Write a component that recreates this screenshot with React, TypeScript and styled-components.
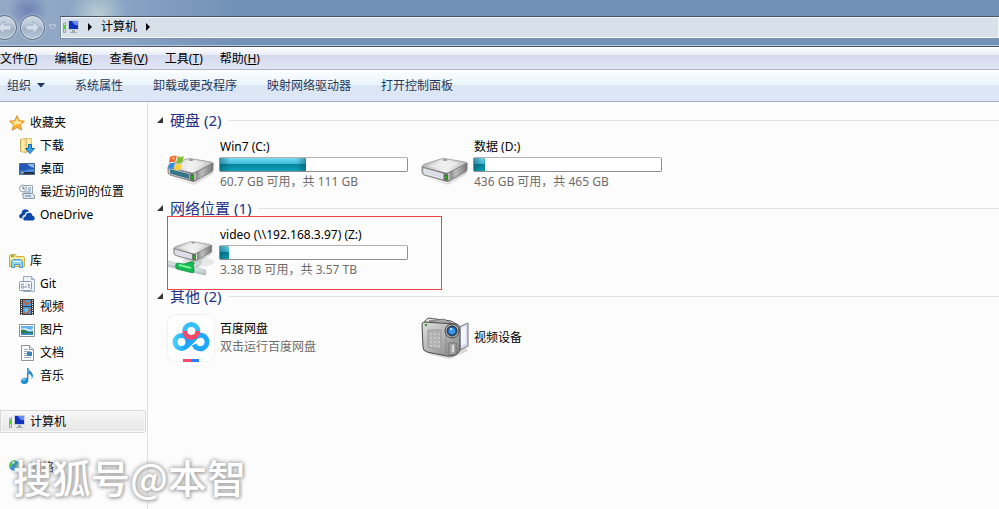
import React from "react";
import styled, { createGlobalStyle } from "styled-components";

const GlobalStyle = createGlobalStyle`
  *, *::before, *::after { box-sizing: border-box; }
  body {
    margin: 0;
    background: #fcfcfc;
    color: #000;
    font: 12px/16px "Noto Sans", "Noto Sans CJK SC", sans-serif;
  }
  button {
    margin: 0;
    padding: 0;
    border: 0;
    background: none;
    color: inherit;
    font: inherit;
    white-space: nowrap;
  }
  a { color: inherit; text-decoration: none; }
  svg { display: block; flex: none; }
`;

const Window = styled.div`
  position: relative;
  display: flex;
  flex-direction: column;
  min-height: 100vh;
  overflow: hidden;
`;

const TitleBar = styled.header`
  display: flex;
  align-items: center;
  height: 47px;
  padding-top: 8px;
  border-bottom: 1px solid #46536a;
  box-shadow: inset 0 -1px 0 #b4c8de;
  background:
    radial-gradient(ellipse 20px 18px at 28px 10px, #5f70adb0 0%, #5f70ad00 100%),
    radial-gradient(ellipse 28px 26px at 98px 14px, #b9cdd2 0%, #b9cdd200 100%),
    linear-gradient(90deg, #93a9c5 0, #8ca5c5 110px, #7191b6 240px);
`;

const RoundButton = styled.button`
  flex: none;
  width: 25px;
  height: 25px;
  border: 1px solid #5c6c82;
  border-radius: 50%;
  background: linear-gradient(#d0dae6 0%, #b3c1d2 48%, #9eafc3 52%, #b8c8da 100%);
  box-shadow: inset 0 0 0 1px #d4dfeb, 0 0 2px #dce7f2;
  svg { margin: auto; }
`;

const NavButtons = styled.div`
  display: flex;
  align-items: center;
  gap: 3px;
  margin-left: -8px;
`;

const HistoryButton = styled.button`
  width: 15px;
  height: 20px;
  svg { margin: auto; }
`;

const AddressBar = styled.nav`
  display: flex;
  flex: 1;
  align-items: center;
  height: 23px;
  padding-left: 2px;
  border: 1px solid #8291a5;
  border-top-color: #46536a;
  border-right: 0;
  box-shadow: inset 0 0 0 1px #f4f7fa;
  background: #d8e0ea;
`;

const Crumb = styled.button`
  display: flex;
  align-items: center;
  gap: 9px;
`;

const CrumbLabel = styled.span`
  padding-left: 9px;
`;

const MenuBar = styled.nav`
  display: flex;
  align-items: center;
  gap: 17px;
  height: 23px;
  padding-top: 1px;
  border-bottom: 1px solid #b1b6c6;
  background: linear-gradient(#fff 0, #e9ecf5 8px, #d4daee 8px, #e0e5f5 100%);
`;

const ToolBar = styled.div`
  display: flex;
  align-items: center;
  gap: 30px;
  height: 32px;
  padding: 0 7px;
  border-bottom: 1px solid #a0afc3;
  color: #1e395b;
  background: linear-gradient(#fdfeff 0, #e9f4fc 15px, #dce7f5 15px, #dce6f4 100%);
`;

const ToolButton = styled.button`
  display: flex;
  align-items: center;
  gap: 6px;
`;

const Body = styled.div`
  display: flex;
  flex: 1;
`;

const Sidebar = styled.nav`
  display: flex;
  flex: none;
  flex-direction: column;
  gap: 23px;
  width: 148px;
  padding: 9px 1px 0 0;
  border-right: 1px solid #d6e5f5;
`;

const NavGroup = styled.ul`
  margin: 0;
  padding: 0;
  list-style: none;
`;

const NavLink = styled.a<{ $level?: number; $selected?: boolean }>`
  display: flex;
  align-items: center;
  gap: 5px;
  height: 23px;
  padding-left: ${(p) => (p.$level ? 19 : 9)}px;
  ${(p) =>
    p.$selected &&
    `
    border-radius: 0 3px 3px 0;
    background: linear-gradient(#f8f8f8, #e5e5e5);
    box-shadow: inset 0 0 0 1px #d9d9d9, inset 0 0 0 2px #f8f8f8;
  `}
`;

const Content = styled.main`
  flex: 1;
  min-width: 0;
  padding-top: 7px;
`;

const Section = styled.section`
  padding-left: 9px;
`;

const SectionTitle = styled.h2`
  display: flex;
  align-items: center;
  gap: 7px;
  height: 22px;
  margin: 0;
  color: #1e3287;
  font-size: 15px;
  font-weight: 400;
  line-height: 22px;
  &::after {
    content: "";
    flex: 1;
    height: 1px;
    background: #e2e2e2;
  }
`;

const SectionToggle = styled.button`
  display: flex;
  align-items: center;
  gap: 7px;
`;

const Tiles = styled.div`
  display: grid;
  grid-template-columns: repeat(auto-fill, 254px);
  padding-left: 10px;
`;

const Tile = styled.a<{ $short?: boolean }>`
  position: relative;
  display: flex;
  align-items: center;
  gap: 4px;
  height: ${(p) => (p.$short ? 62 : 66)}px;
`;

const TileText = styled.div`
  display: flex;
  flex-direction: column;
  gap: 2px;
`;

const TileName = styled.span`
  padding-left: 1px;
`;

const TileNote = styled(TileName)`
  color: #6d6d6d;
`;

const Capacity = styled.div`
  width: 189px;
  height: 15px;
  border: 1px solid #8e8e8e;
  border-top-color: #b2b2b2;
  border-radius: 2px;
  background: #fff;
`;

const CapacityFill = styled.div`
  height: 100%;
  background:
    linear-gradient(90deg, #0a506080, #0a506000 10px, #0a506000 calc(100% - 10px), #0a506080),
    linear-gradient(#7bd9f0 0, #3cbcdc 6px, #04809a 6px, #10a4be 100%);
`;

const Highlight = styled.span`
  position: absolute;
  inset: -3px -21px -5px 0;
  border: 1px solid #ee4444;
  pointer-events: none;
`;

const Watermark = styled.div`
  position: absolute;
  bottom: 5px;
  left: 13px;
  color: #fff;
  font: 500 39px/56px "Noto Sans CJK SC", sans-serif;
  text-shadow: 0 0 4px #aaa, 0 0 5px #aaa, 1px 1px 3px #aaa;
  opacity: 0.94;
  pointer-events: none;
  white-space: nowrap;
`;

const Arrow = ({ back = false }: { back?: boolean }) => (
  <svg width="17" height="17" viewBox="0 0 17 17" aria-hidden="true">
    <path
      d={back ? "M8 2 2 8.5 8 15v-4h7V6H8z" : "M9 2l6 6.5L9 15v-4H2V6h7z"}
      fill="#d3dde8"
      stroke="#a3b2c6"
    />
  </svg>
);

const Chevron = () => (
  <svg width="4" height="8" viewBox="0 0 4 8" aria-hidden="true">
    <path d="M0 0l4 4-4 4z" fill="#000" />
  </svg>
);

const Small = ({ children }: { children: React.ReactNode }) => (
  <svg width="16" height="16" viewBox="0 0 16 16" aria-hidden="true">
    {children}
  </svg>
);

const StarIcon = () => (
  <Small>
    <path d="M8 .7l2.2 5 5.2.5-4 3.6 1.3 5.3L8 12.4l-4.7 2.7 1.3-5.3-4-3.6 5.2-.5z" fill="#ffb733" stroke="#e18a28" />
    <path d="M8 2.8l1.4 3.8 3.8.4-3 2.4L8 8.4 4.2 11l1.2-3.3-2.8-1.1 4-.2z" fill="#ffe9a0" />
  </Small>
);

const DownloadIcon = () => (
  <Small>
    <path d="M1.5 1.5l6-1v14l-6-1z" fill="#f3e19a" stroke="#cfae50" />
    <path d="M7.5.5h4.8v13H7.5z" fill="#fbefb7" stroke="#d8bd66" />
    <path d="M4 1v13" stroke="#fff4c4" />
    <path d="M9.5 6.5h3v4h3L11 15.5l-4.500-5h3z" fill="#37a2ed" stroke="#1766a9" />
  </Small>
);

const DesktopIcon = () => (
  <Small>
    <path d="M.5 2.5h15v11H.5z" fill="#4a8cdf" stroke="#52637d" />
    <path d="M1 3h14v5Q7 8 1 12z" fill="#2258ba" />
    <path d="M8 3h7v4Q11 6 8 3z" fill="#86b9f2" />
    <path d="M1 11h14v2H1z" fill="#26303e" />
    <circle cx="3" cy="11.5" r="2" fill="#3c9fe5" />
    <circle cx="3" cy="11.5" r="1" fill="#f2694a" />
  </Small>
);

const RecentIcon = () => (
  <Small>
    <path d="M6.5 1.5h7v10h-8z" fill="#f2f5f8" stroke="#9aa4b0" />
    <path d="M9 4h3M9 6h3M7 8h5" stroke="#6a94bd" />
    <path d="M3.5 9.5h10l2 2v3h-11z" fill="#dfe5ea" stroke="#909aa6" />
    <path d="M6 12h6" stroke="#5589c7" />
    <circle cx="4" cy="4.5" r="3.5" fill="#f7fafc" stroke="#949ea9" />
    <path d="M4 2.5v2.3H6" fill="none" stroke="#586777" />
  </Small>
);

const OneDriveIcon = () => (
  <Small>
    <path d="M1.8 11.2C-.6 10.5-.2 7 2.5 6.8 2.3 3.8 4.8 2 7.2 2.4c1.5.2 2.5 1 3.1 2.2C7.4 4.6 6 6.2 5.7 8 3.7 8.2 3 9.8 3.6 11.2z" fill="#0b47a8" />
    <path d="M5.6 13.6C3.6 13 3.8 9.7 6.6 9.5 6.5 6.8 8.6 5.5 10.4 5.7c1.7.1 2.8 1.2 3 3 2.8.3 3.2 4 .5 4.9z" fill="#0b47a8" />
  </Small>
);

const LibraryIcon = () => (
  <Small>
    <path d="M.5 13.5v-11l1-1h5l1 2h7l1 1v9z" fill="#f5df84" stroke="#cfac48" />
    <path d="M2 3h3" stroke="#54ad47" strokeWidth="1.5" />
    <path d="M1 5.5h14" stroke="#fff5c1" />
    <path d="M2.5 14.5v-6l2-2h7l2 2v6h-3v-3h-5v3z" fill="#8fd6f5" stroke="#4a9ac6" />
    <path d="M4 8.5h8" stroke="#d9f5ff" />
  </Small>
);

const GitIcon = () => (
  <Small>
    <path d="M4.5.5h8l3 3v12h-11z" fill="#eef3f8" stroke="#9babc0" />
    <path d="M12.5.5v3h3" fill="#cbd7e6" stroke="#9babc0" />
    <rect x=".5" y="5.5" width="12" height="9" rx="1" fill="#fff" stroke="#8397b2" />
    <path d="M5 8H2.7v4H5v-2H4M7 9.5V12M7 7.5v1M9.8 7.5V12H11M9 9h2" fill="none" stroke="#7890ad" />
  </Small>
);

const VideoIcon = () => (
  <Small>
    <path d="M1 0h14v16H1z" fill="#3a383c" />
    <path d="M4 1h8v6H4zM4 8h8v7H4z" fill="#4f9dd8" />
    <path d="M4 1h2l2 3 4-2v2L8 6H6zM4 15l3-3 1-3 4 1v1l-3 4z" fill="#b06a50" />
    <path d="M5 10l3-1 2 2-3 3z" fill="#72bdeb" />
    <path d="M2.500 1v15M13.500 1v15" stroke="#f1f1f1" strokeDasharray="1 1" />
  </Small>
);

const PictureIcon = () => (
  <Small>
    <path d="M.5 2.5h15v12H.5z" fill="#fff" stroke="#87929e" />
    <path d="M2 4h12v9H2z" fill="#62b4ef" />
    <path d="M2 7q4-2 7 0t5-1v3H2z" fill="#c7e8fa" />
    <path d="M2 8q4-1 6 1t6 0v2H2z" fill="#2e7951" />
    <path d="M2 11h12v2H2z" fill="#318cb3" />
  </Small>
);

const DocumentIcon = () => (
  <Small>
    <path d="M2.5.5h8l4 4v11h-12z" fill="#fff" stroke="#8c959d" />
    <path d="M10.5.5v4h4" fill="#e3e8ed" stroke="#8c959d" />
    <path d="M5 4.5h4M5 6.5h7M5 8.5h3M5 10.5h3M5 12.5h7" stroke="#9babbc" />
    <path d="M8 7h5v4H8z" fill="#3484bd" />
  </Small>
);

const MusicIcon = () => (
  <Small>
    <path d="M8 0h1.400c.3 3.200 4.800 3.600 4.500 8-.1 1.300-.7 2.300-1.500 3 1-3.200-.5-4.500-3-5.300v6.500c0 4.800-7.400 5-7.400 1C2 10.200 5 9 8 10z" fill="#218bd2" />
    <ellipse cx="5" cy="11.5" rx="2" ry="1" fill="#80cbf5" />
    <path d="M9 1v4" stroke="#69b9eb" />
  </Small>
);

const ComputerIcon = () => (
  <Small>
    <path d="M5 1h11v10H5z" fill="#c7cfd9" />
    <path d="M6 2h9v8H6z" fill="#102fba" />
    <path d="M9 2h6v4Q11 7 9 2z" fill="#6788f1" />
    <path d="M9 11h3v2h2v1H7v-1h2z" fill="#a4abb4" />
    <path d="M.5 4.5l2-1v10h-2z" fill="#d5dadf" stroke="#9aa3ab" />
    <path d="M1 6h1v4H1z" fill="#4ad12b" />
  </Small>
);

const NetworkIcon = () => (
  <Small>
    <path d="M8 5h8v7H8z" fill="#b6c1d4" />
    <path d="M9 6h6v5H9z" fill="#3047bb" />
    <circle cx="5.5" cy="5.5" r="5.3" fill="#2787cf" />
    <path d="M1 3q3-4 6-2L5 4 3 5v3L1 7zM7 5l3-1v4L8 9z" fill="#5fc750" />
    <path d="M3 2q2-1 3 0L4 4z" fill="#d8f5ff" />
  </Small>
);

const DriveBody = () => (
  <>
    <path d="M3 37l23 6 20-14v5L27 45z" fill="#000" opacity=".12" />
    <path d="M1 27Q1 25 4 24l16-5q3-1 6 0l18 3q3 1 2 3L27 33q-2 1-4 0L2 28z" fill="url(#driveTop)" stroke="#909090" strokeWidth=".8" />
    <path d="M7 26l15-5 16 2-13 7z" fill="#eee" opacity=".7" />
    <path d="M1 27l23 6q3 1 5-1l17-9v7q0 1-2 2L28 41q-2 1-4 0L3 35q-2-1-2-3z" fill="url(#driveSide)" stroke="#727272" strokeWidth=".8" />
    <path d="M3 29l19 5v5L4 34q-1 0-1-2z" fill="#d9dde8" stroke="#f7f7f7" strokeWidth=".7" />
    <path d="M28 33v7" stroke="#f5f5f5" />
    <path d="M24 35l2 .4v4l-2-.4z" fill="#38df16" stroke="#125c0b" strokeWidth=".7" />
    <ellipse cx="24" cy="20" rx="2.5" ry=".8" fill="#777" />
  </>
);

const Large = ({ children }: { children?: React.ReactNode }) => (
  <svg width="48" height="48" viewBox="0 0 48 48" aria-hidden="true">
    <defs>
      <linearGradient id="driveTop" x1="0" y1="0" x2="1" y2="0">
        <stop offset="0" stopColor="#b5b5b5" />
        <stop offset=".5" stopColor="#f5f5f5" />
        <stop offset="1" stopColor="#bdbdbd" />
      </linearGradient>
      <linearGradient id="driveSide" x1="0" y1="0" x2="1" y2="0">
        <stop offset="0" stopColor="#bbb" />
        <stop offset=".58" stopColor="#777" />
        <stop offset=".75" stopColor="#bdbdbd" />
        <stop offset="1" stopColor="#777" />
      </linearGradient>
      <linearGradient id="camera" x1="0" y1="0" x2="1" y2="1">
        <stop offset="0" stopColor="#dedede" />
        <stop offset=".5" stopColor="#b4b4b4" />
        <stop offset="1" stopColor="#7c7c7c" />
      </linearGradient>
      <linearGradient id="pipe" x1="0" y1="0" x2="0" y2="1">
        <stop offset="0" stopColor="#eef4f4" />
        <stop offset="1" stopColor="#a7b7ba" />
      </linearGradient>
      <linearGradient id="cloud" x1="0" y1="0" x2="1" y2="0">
        <stop offset="0" stopColor="#42cdff" />
        <stop offset="1" stopColor="#159bff" />
      </linearGradient>
    </defs>
    {children}
  </svg>
);

const DriveIcon = () => (
  <Large>
    <DriveBody />
  </Large>
);

const SystemDriveIcon = () => (
  <Large>
    <DriveBody />
    <path d="M3 29l19 5v5L4 34q-1 0-1-2z" fill="#367487" />
    <path d="M3 17q3-2 7-1L8 22q-3-1-6 1z" fill="#ee6729" />
    <path d="M11 16q3 2 6 0l-2 7q-3 1-6 0z" fill="#83bd31" />
    <path d="M2 24q3-2 6-1l-2 6q-3-1-5 0z" fill="#348de0" />
    <path d="M9 24q3 1 6 0l-2 6q-3 1-6-1z" fill="#ffd034" />
    <path d="M4 18q2-1 4-1l-1 3z" fill="#ffb087" />
  </Large>
);

const NetworkDriveIcon = () => (
  <Large>
    <ellipse cx="31" cy="34" rx="16" ry="5" fill="#000" opacity=".08" />
    <g transform="translate(6 -2) scale(.84)">
      <DriveBody />
    </g>
    <path d="M22 38q9 3 12-5" fill="none" stroke="#c5d1d0" strokeWidth="3" />
    <path d="M1 33l10 3v5L1 38q-2-3 0-5z" fill="url(#pipe)" stroke="#a0b0b2" strokeWidth=".7" />
    <path d="M27 39l11 3q2 3 0 5l-12-3z" fill="url(#pipe)" stroke="#a0b0b2" strokeWidth=".7" />
    <path d="M10 35l7 1 6-2q5-1 4 2l-1 2 1 3q1 2-1 4l-16-4q-3-3 0-6z" fill="#16b954" stroke="#098a36" strokeWidth=".7" />
    <path d="M12 37l12 3" stroke="#7ef29c" strokeWidth="2" />
  </Large>
);

const NetdiskIcon = () => (
  <Large>
    <rect x=".5" y=".5" width="47" height="47" rx="8" fill="#fff" stroke="#f0f0f0" />
    <g fill="none" strokeWidth="5">
      <circle cx="14.5" cy="28" r="6.5" stroke="url(#cloud)" />
      <path d="M27 30.5a6.800 6.800 0 1 0 3-8.500L19.500 32.500" stroke="#20a7ff" />
      <path d="M17.800 17a6.500 6.500 0 1 1 13 0" stroke="#35bdfd" />
      <path d="M17.800 17a6.500 6.500 0 0 0 13 0" stroke="#ff4867" />
    </g>
    <path d="M16 45h8v3h-8z" fill="#fa4968" />
    <path d="M24 45h8v3h-8z" fill="#267dff" />
  </Large>
);

const CameraIcon = () => (
  <Large>
    <path d="M5 40l24 5 18-8-4-5z" fill="#000" opacity=".14" />
    <path d="M38 13l9-4v23l-8 4z" fill="#d6dcec" stroke="#777" />
    <path d="M40 14l5-2v17l-5 3z" fill="#f2f3fb" />
    <path d="M3 8l4-4 23 3 7 4-6 5z" fill="#dedede" stroke="#555" />
    <path d="M8 7l15-2 9 5-8 1z" fill="#aaa" stroke="#666" strokeWidth=".7" />
    <path d="M3 8q-2 0-2 3l1 22q0 4 4 5l20 4q7 1 11-3 2-2 2-5V15q0-5-5-5z" fill="url(#camera)" stroke="#4a4a4a" />
    <path d="M25 14v28" stroke="#8a8a8a" />
    <path d="M7 16h13v20l-13-3z" fill="#b2b2b2" stroke="#999" />
    <path d="M9 20h10M9 24h10M9 28h10M9 32h10" stroke="#dadada" strokeDasharray="2 2" />
    <circle cx="31" cy="17" r="7" fill="#bbb" stroke="#444" />
    <circle cx="31" cy="17" r="5" fill="#1f62a8" stroke="#2a2a2a" />
    <circle cx="31" cy="17" r="3" fill="#3d9cf0" />
    <circle cx="30" cy="15" r="1" fill="#d5f0ff" />
    <path d="M28 29h7v11l-7 1z" fill="#a8a8a8" stroke="#777" />
    <path d="M31 31h2v7h-2z" fill="#d8d8d8" />
    <circle cx="5" cy="11" r="1" fill="#39cf35" stroke="#205f20" strokeWidth=".5" />
  </Large>
);

const menus = [
  ["文件", "F"],
  ["编辑", "E"],
  ["查看", "V"],
  ["工具", "T"],
  ["帮助", "H"],
];

const commands = ["系统属性", "卸载或更改程序", "映射网络驱动器", "打开控制面板"];

type NavItem = { label: string; icon: React.ComponentType; level?: number; selected?: boolean };

const navigation: NavItem[][] = [
  [
    { label: "收藏夹", icon: StarIcon },
    { label: "下载", icon: DownloadIcon, level: 1 },
    { label: "桌面", icon: DesktopIcon, level: 1 },
    { label: "最近访问的位置", icon: RecentIcon, level: 1 },
    { label: "OneDrive", icon: OneDriveIcon, level: 1 },
  ],
  [
    { label: "库", icon: LibraryIcon },
    { label: "Git", icon: GitIcon, level: 1 },
    { label: "视频", icon: VideoIcon, level: 1 },
    { label: "图片", icon: PictureIcon, level: 1 },
    { label: "文档", icon: DocumentIcon, level: 1 },
    { label: "音乐", icon: MusicIcon, level: 1 },
  ],
  [{ label: "计算机", icon: ComputerIcon, selected: true }],
  [{ label: "网络", icon: NetworkIcon }],
];

type Entry = {
  name: string;
  icon: React.ComponentType;
  note?: string;
  used?: number;
  marked?: boolean;
};

const sections: { title: string; short?: boolean; entries: Entry[] }[] = [
  {
    title: "硬盘 (2)",
    entries: [
      { name: "Win7 (C:)", icon: SystemDriveIcon, used: 46, note: "60.7 GB 可用，共 111 GB" },
      { name: "数据 (D:)", icon: DriveIcon, used: 6, note: "436 GB 可用，共 465 GB" },
    ],
  },
  {
    title: "网络位置 (1)",
    entries: [
      {
        name: "video (\\\\192.168.3.97) (Z:)",
        icon: NetworkDriveIcon,
        used: 5,
        note: "3.38 TB 可用，共 3.57 TB",
        marked: true,
      },
    ],
  },
  {
    title: "其他 (2)",
    short: true,
    entries: [
      { name: "百度网盘", icon: NetdiskIcon, note: "双击运行百度网盘" },
      { name: "视频设备", icon: CameraIcon },
    ],
  },
];

export default function App() {
  return (
    <Window>
      <GlobalStyle />
      <TitleBar>
        <NavButtons>
          <RoundButton aria-label="后退">
            <Arrow back />
          </RoundButton>
          <RoundButton aria-label="前进">
            <Arrow />
          </RoundButton>
        </NavButtons>
        <HistoryButton aria-label="历史记录">
          <svg width="9" height="6" viewBox="0 0 9 6" aria-hidden="true">
            <path d="M1 1h7L4.500 5z" fill="#8198b6" stroke="#cbd7e5" />
          </svg>
        </HistoryButton>
        <AddressBar aria-label="地址">
          <Crumb aria-label="位置">
            <ComputerIcon />
            <Chevron />
          </Crumb>
          <Crumb>
            <CrumbLabel>计算机</CrumbLabel>
            <Chevron />
          </Crumb>
        </AddressBar>
      </TitleBar>
      <MenuBar aria-label="菜单">
        {menus.map(([label, key]) => (
          <button key={key}>
            {label}(<u>{key}</u>)
          </button>
        ))}
      </MenuBar>
      <ToolBar role="toolbar">
        <ToolButton>
          组织
          <svg width="8" height="5" viewBox="0 0 8 5" aria-hidden="true">
            <path d="M0 0h8L4 4.500z" fill="#1e395b" />
          </svg>
        </ToolButton>
        {commands.map((label) => (
          <ToolButton key={label}>{label}</ToolButton>
        ))}
      </ToolBar>
      <Body>
        <Sidebar aria-label="导航">
          {navigation.map((group) => (
            <NavGroup key={group[0].label}>
              {group.map(({ label, icon: Icon, level, selected }) => (
                <li key={label}>
                  <NavLink href="#" $level={level} $selected={selected}>
                    <Icon />
                    {label}
                  </NavLink>
                </li>
              ))}
            </NavGroup>
          ))}
        </Sidebar>
        <Content>
          {sections.map(({ title, short, entries }) => (
            <Section key={title}>
              <SectionTitle>
                <SectionToggle aria-expanded="true">
                  <svg width="6" height="6" viewBox="0 0 6 6" aria-hidden="true">
                    <path d="M6 0v6H0z" fill="#333" />
                  </svg>
                  {title}
                </SectionToggle>
              </SectionTitle>
              <Tiles>
                {entries.map(({ name, icon: Icon, note, used, marked }) => (
                  <Tile key={name} href="#" $short={short}>
                    <Icon />
                    <TileText>
                      <TileName>{name}</TileName>
                      {used !== undefined && (
                        <Capacity role="meter" aria-label={name} aria-valuemin={0} aria-valuemax={100} aria-valuenow={used}>
                          <CapacityFill style={{ width: `${used}%` }} />
                        </Capacity>
                      )}
                      {note && <TileNote>{note}</TileNote>}
                    </TileText>
                    {marked && <Highlight />}
                  </Tile>
                ))}
              </Tiles>
            </Section>
          ))}
        </Content>
      </Body>
      <Watermark>搜狐号@本智</Watermark>
    </Window>
  );
}
